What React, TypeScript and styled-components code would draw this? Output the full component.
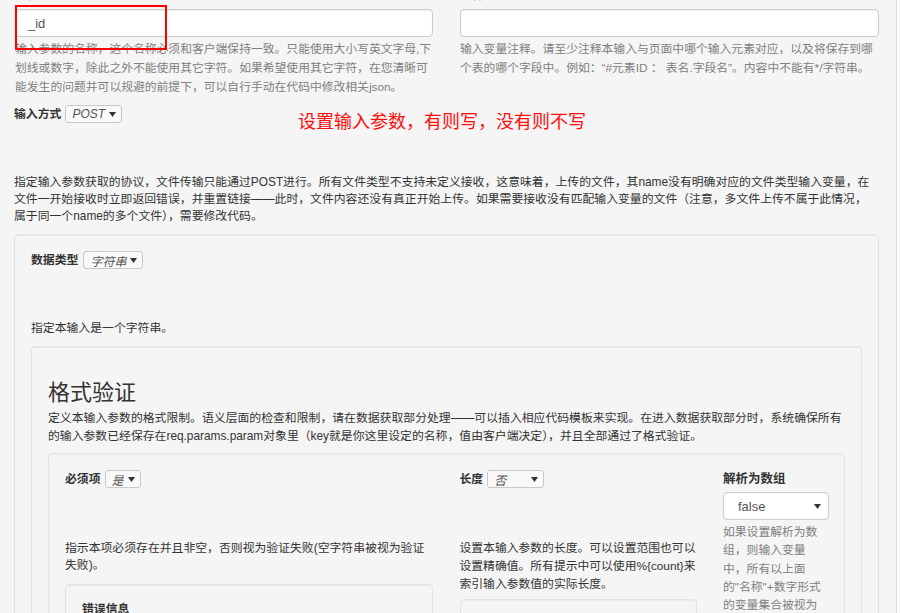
import React from "react";
import styled, { createGlobalStyle } from "styled-components";

const GlobalStyle = createGlobalStyle`
  html, body {
    margin: 0;
    padding: 0;
    background: #fafafa;
  }
  body {
    font-family: "Liberation Sans", "Noto Sans CJK SC", sans-serif;
    font-size: 11.85px;
    color: #333;
    overflow: hidden;
  }
`;

const Page = styled.div`
  position: relative;
  box-sizing: border-box;
  width: 897px;
  min-height: 640px;
  margin-top: -13px;
  padding: 0 17px 0 14px;
  background: #f5f5f5;
  border-right: 1px solid #dcdcdc;
`;

const TopGrid = styled.div`
  display: grid;
  grid-template-columns: 418px 419px;
  column-gap: 27px;
  margin-left: 1px;
`;

const Field = styled.div`
  display: flex;
  flex-direction: column;
`;

const Label = styled.label`
  display: block;
  font-weight: bold;
  line-height: 17px;
  margin-bottom: 5px;
  color: #333;
`;

const TextInput = styled.div`
  box-sizing: border-box;
  height: 28px;
  padding: 0 12px;
  display: flex;
  align-items: center;
  background: #fff;
  border: 1px solid #ccc;
  border-radius: 4px;
  font-size: 13px;
  color: #555;
  box-shadow: inset 0 1px 1px rgba(0, 0, 0, 0.06);
`;

const Help = styled.p<{ $lh?: number }>`
  margin: 3px 0 0;
  color: #808080;
  font-size: 11.8px;
  line-height: ${(p) => p.$lh ?? 19}px;
`;

const MarkBox = styled.div`
  position: absolute;
  left: 15px;
  top: 18px;
  width: 148px;
  height: 41px;
  border: 2px solid #ff0000;
`;

const InlineRow = styled.div<{ $mt?: number }>`
  display: flex;
  align-items: flex-start;
  margin-top: ${(p) => p.$mt ?? 0}px;
`;

const InlineLabel = styled.span<{ $gap?: number }>`
  font-weight: bold;
  line-height: 18px;
  margin-right: ${(p) => p.$gap ?? 4}px;
  white-space: nowrap;
`;

const MiniSelect = styled.span<{ $w?: number }>`
  box-sizing: border-box;
  display: inline-flex;
  align-items: center;
  justify-content: space-between;
  gap: 4px;
  height: 18px;
  min-width: ${(p) => p.$w ?? 0}px;
  padding: 0 5px 0 6px;
  border: 1px solid #c8c8c8;
  border-radius: 3px;
  background: #f9f9f9;
  font-style: italic;
  font-size: 12px;
  color: #555;
`;

const Note = styled.span`
  margin: 3px 0 0 176px;
  font-size: 18px;
  line-height: 24px;
  color: #ff0d0d;
  font-family: "Noto Sans CJK SC", sans-serif;
`;

const Para = styled.p<{ $mt?: number; $lh?: number }>`
  margin: ${(p) => p.$mt ?? 0}px 0 0;
  line-height: ${(p) => p.$lh ?? 17}px;
  color: #333;
`;

const WidePara = styled(Para)`
  padding-right: 6px;
`;

const Well = styled.div<{ $mt?: number }>`
  margin-top: ${(p) => p.$mt ?? 0}px;
  padding: 16px;
  background: #f5f5f5;
  border: 1px solid #e3e3e3;
  border-radius: 4px;
  box-shadow: inset 0 1px 1px rgba(0, 0, 0, 0.05);
`;

const Heading = styled.h3`
  margin: 15px 0 0;
  font-size: 22px;
  font-weight: 400;
  line-height: 24px;
  color: #333;
  font-family: "Noto Sans CJK SC", sans-serif;
`;

const RuleGrid = styled.div`
  display: grid;
  grid-template-columns: 368px 237px 106px;
  column-gap: 26.5px;
  align-items: start;
`;

const Col = styled.div`
  display: flex;
  flex-direction: column;
  min-width: 0;
`;

const NarrowPara = styled(Para)`
  font-size: 11.8px;
`;

const StackLabel = styled.div`
  font-weight: bold;
  font-size: 12.5px;
  line-height: 17px;
  margin-top: 1px;
`;

const BlockSelect = styled.div`
  box-sizing: border-box;
  height: 28px;
  margin-top: 4px;
  padding: 0 7px 0 14px;
  display: flex;
  align-items: center;
  justify-content: space-between;
  background: #fff;
  border: 1px solid #ccc;
  border-radius: 4px;
  font-size: 13px;
  color: #555;
`;

const SubLabel = styled.div`
  font-weight: bold;
  line-height: 17px;
`;

function Caret() {
  return (
    <svg width="7" height="5" viewBox="0 0 7 5">
      <path d="M0 0 L7 0 L3.5 5 Z" fill="#333" />
    </svg>
  );
}

export default function App() {
  return (
    <>
      <GlobalStyle />
      <Page>
        <TopGrid>
          <Field>
            <Label>名称</Label>
            <TextInput>_id</TextInput>
            <Help>
              输入参数的名称，这个名称必须和客户端保持一致。只能使用大小写英文字母,下划线或数字，除此之外不能使用其它字符。如果希望使用其它字符，在您清晰可能发生的问题并可以规避的前提下，可以自行手动在代码中修改相关json。
            </Help>
          </Field>
          <Field>
            <Label>注释</Label>
            <TextInput />
            <Help>
              输入变量注释。请至少注释本输入与页面中哪个输入元素对应，以及将保存到哪个表的哪个字段中。例如：“#元素ID ： 表名.字段名”。内容中不能有*/字符串。
            </Help>
          </Field>
        </TopGrid>
        <MarkBox />

        <InlineRow $mt={8}>
          <InlineLabel>输入方式</InlineLabel>
          <MiniSelect $w={55}>
            POST <Caret />
          </MiniSelect>
          <Note>设置输入参数，有则写，没有则不写</Note>
        </InlineRow>

        <WidePara $mt={42}>
          指定输入参数获取的协议，文件传输只能通过POST进行。所有文件类型不支持未定义接收，这意味着，上传的文件，其name没有明确对应的文件类型输入变量，在文件一开始接收时立即返回错误，并重置链接——此时，文件内容还没有真正开始上传。如果需要接收没有匹配输入变量的文件（注意，多文件上传不属于此情况，属于同一个name的多个文件），需要修改代码。
        </WidePara>

        <Well $mt={9}>
          <InlineRow>
            <InlineLabel $gap={5}>数据类型</InlineLabel>
            <MiniSelect $w={58}>
              字符串 <Caret />
            </MiniSelect>
          </InlineRow>
          <Para $mt={51}>指定本输入是一个字符串。</Para>

          <Well $mt={9}>
            <Heading>格式验证</Heading>
            <Para $mt={7} $lh={18}>
              定义本输入参数的格式限制。语义层面的检查和限制，请在数据获取部分处理——可以插入相应代码模板来实现。在进入数据获取部分时，系统确保所有的输入参数已经保存在req.params.param对象里（key就是你这里设定的名称，值由客户端决定），并且全部通过了格式验证。
            </Para>

            <Well $mt={8}>
              <RuleGrid>
                <Col>
                  <InlineRow>
                    <InlineLabel>必须项</InlineLabel>
                    <MiniSelect $w={35}>
                      是 <Caret />
                    </MiniSelect>
                  </InlineRow>
                  <Para $mt={52}>
                    指示本项必须存在并且非空，否则视为验证失败(空字符串被视为验证失败)。
                  </Para>
                  <Well $mt={10}>
                    <SubLabel>错误信息</SubLabel>
                  </Well>
                </Col>
                <Col>
                  <InlineRow>
                    <InlineLabel>长度</InlineLabel>
                    <MiniSelect $w={57}>
                      否 <Caret />
                    </MiniSelect>
                  </InlineRow>
                  <NarrowPara $mt={51} $lh={18}>
                    设置本输入参数的长度。可以设置范围也可以设置精确值。所有提示中可以使用%{"{count}"}来索引输入参数值的实际长度。
                  </NarrowPara>
                  <Well $mt={6}>
                    <SubLabel>&nbsp;</SubLabel>
                  </Well>
                </Col>
                <Col>
                  <StackLabel>解析为数组</StackLabel>
                  <BlockSelect>
                    false <Caret />
                  </BlockSelect>
                  <Help $lh={18.3}>
                    如果设置解析为数组，则输入变量中，所有以上面的"名称"+数字形式的变量集合被视为一个数组，被统一处理。
                  </Help>
                </Col>
              </RuleGrid>
            </Well>
          </Well>
        </Well>
      </Page>
    </>
  );
}
